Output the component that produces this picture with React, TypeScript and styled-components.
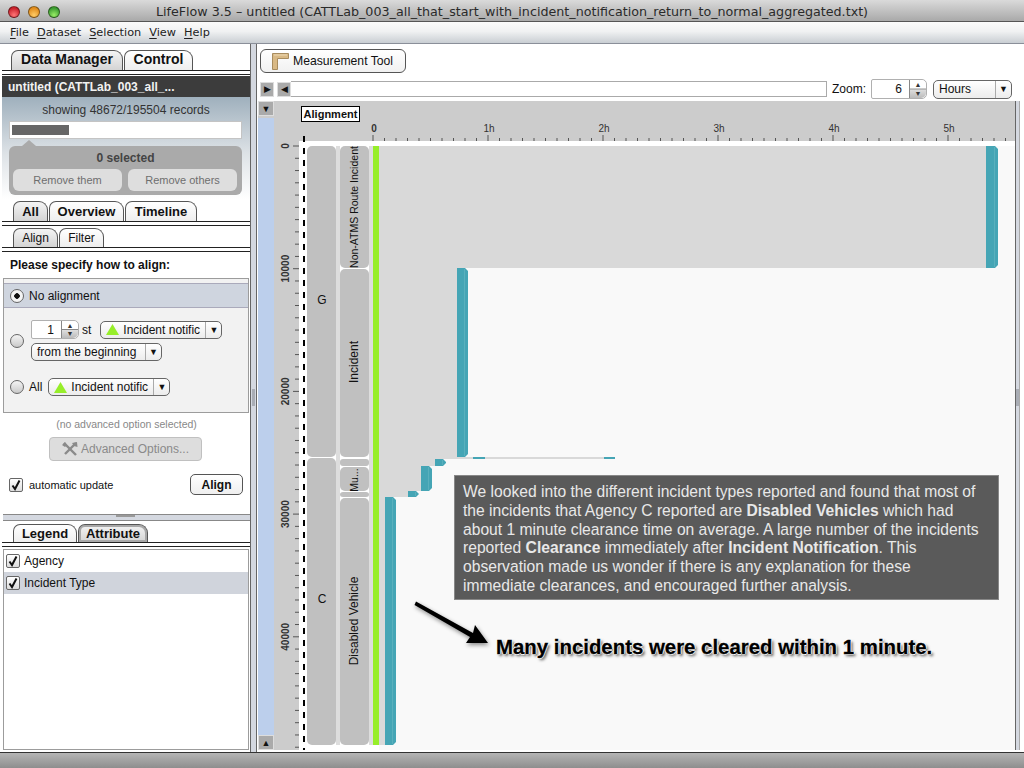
import styled, { createGlobalStyle } from "styled-components";
import { Fragment } from "react";

const Global = createGlobalStyle`
  * { box-sizing: border-box; }
  html, body { margin: 0; padding: 0; overflow: hidden; background: #fff; }
  body { font-family: "Liberation Sans", Arial, sans-serif; color: #111; }
`;

const Window = styled.div`
  width: 1024px;
  height: 768px;
  display: flex;
  flex-direction: column;
  overflow: hidden;
`;

const TitleBar = styled.div`
  height: 22px;
  flex: none;
  position: relative;
  display: flex;
  align-items: center;
  justify-content: center;
  padding-top: 2px;
  background: linear-gradient(#dadada, #a9a9a9);
  border-bottom: 1px solid #555;
  font-family: "DejaVu Sans", sans-serif;
  font-size: 12.7px;
  color: #2a2a2a;
`;

const Lights = styled.div`
  position: absolute;
  left: 8px;
  top: 6px;
  display: flex;
  gap: 8px;
`;

const Light = styled.span<{ $c: string; $d: string }>`
  width: 12px;
  height: 12px;
  border-radius: 50%;
  border: 1px solid rgba(0, 0, 0, 0.45);
  background: radial-gradient(circle at 50% 80%, ${(p) => p.$c}, ${(p) => p.$d} 75%);
`;

const MenuBar = styled.div`
  height: 22px;
  flex: none;
  display: flex;
  align-items: center;
  gap: 8px;
  padding: 0 0 1px 10px;
  background: linear-gradient(#fbfbfb, #f0f1f2 45%, #c9ced3);
  border-bottom: 1px solid #8a8f99;
  font-family: "DejaVu Sans", sans-serif;
  font-size: 11.3px;
  color: #222;
  u { text-underline-offset: 2px; }
`;

const Body = styled.div`
  flex: 1;
  display: flex;
  min-height: 0;
`;

const LeftPanel = styled.div`
  width: 250px;
  flex: none;
  display: flex;
  flex-direction: column;
  padding-left: 1px;
`;

const VSplit = styled.div`
  width: 7px;
  flex: none;
  position: relative;
  background: #d4d8e0;
  border-left: 1px solid #666;
  border-right: 1px solid #666;
  &::after {
    content: "";
    position: absolute;
    left: 1px;
    top: 345px;
    width: 3px;
    height: 17px;
    background: #a9adb5;
  }
`;

const TabStrip = styled.div<{ $top: number; $h: number; $pad?: number }>`
  height: ${(p) => p.$h}px;
  margin-top: ${(p) => p.$top}px;
  padding-left: ${(p) => p.$pad ?? 12}px;
  flex: none;
  display: flex;
  align-items: flex-end;
`;

const Tab = styled.div<{ $w: number; $sel?: boolean; $bold?: boolean; $inset?: boolean; $size?: number; $lift?: number }>`
  width: ${(p) => p.$w}px;
  height: 100%;
  margin-right: 1px;
  padding-bottom: ${(p) => p.$lift ?? 0}px;
  display: flex;
  align-items: center;
  justify-content: center;
  border: 1px solid #555;
  border-bottom: none;
  border-radius: 7px 9px 0 0;
  font-size: ${(p) => p.$size ?? 13}px;
  font-weight: ${(p) => (p.$bold ? 700 : 400)};
  color: #111;
  background: ${(p) => (p.$sel ? "linear-gradient(#f4f4f4, #d4d4d4)" : "linear-gradient(#ffffff, #eeeeee)")};
  box-shadow: ${(p) => (p.$inset ? "inset 0 0 0 2px #a8a8a8" : "none")};
`;

const TabRule = styled.div<{ $mb?: number }>`
  height: 5px;
  flex: none;
  margin-bottom: ${(p) => p.$mb ?? 0}px;
  border-top: 1px solid #222;
  border-bottom: 1px solid #222;
  margin-left: 1px;
`;

const DatasetHeader = styled.div`
  height: 21px;
  margin: 1px 0 0 1px;
  flex: none;
  display: flex;
  align-items: center;
  padding-left: 6px;
  background: #3c3c3c;
  color: #f2f2f2;
  font-size: 12px;
  font-weight: 700;
`;

const DatasetBody = styled.div`
  height: 102px;
  flex: none;
  margin-left: 1px;
  padding: 6px 7px 0 7px;
  background: linear-gradient(#9fb0bd, #dde2e6 55%, #ffffff 100%);
  display: flex;
  flex-direction: column;
`;

const RecordsLabel = styled.div`
  text-align: center;
  font-size: 12px;
  line-height: 14px;
  color: #333;
  margin-bottom: 4px;
`;

const RecordsBar = styled.div`
  height: 18px;
  flex: none;
  margin-right: 1px;
  padding: 3px 2px;
  background: #fff;
  border: 1px solid #c4c4c4;
`;

const RecordsFill = styled.div`
  height: 100%;
  background: #666;
`;

const Selected = styled.div`
  position: relative;
  margin-top: 7px;
  height: 49px;
  margin-right: 1px;
  padding: 5px 4px 0;
  border-radius: 6px;
  background: #aaaaaa;
  &::before {
    content: "";
    position: absolute;
    left: 13px;
    top: -6px;
    border-left: 7px solid transparent;
    border-right: 7px solid transparent;
    border-bottom: 6px solid #aaaaaa;
  }
`;

const SelectedCount = styled.div`
  text-align: center;
  font-size: 12px;
  line-height: 14px;
  font-weight: 700;
  color: #444;
  margin-bottom: 4px;
`;

const SelectedActions = styled.div`
  display: grid;
  grid-template-columns: 109px 109px;
  gap: 6px;
`;

const GhostButton = styled.div`
  height: 22px;
  display: flex;
  align-items: center;
  justify-content: center;
  border-radius: 6px;
  background: #dedede;
  color: #6e6e6e;
  font-size: 11px;
`;

const Heading = styled.div`
  height: 26px;
  flex: none;
  padding: 6px 0 0 9px;
  font-size: 12px;
  font-weight: 700;
  color: #111;
`;

const AlignBox = styled.div`
  height: 135px;
  flex: none;
  margin: 0 1px 0 2px;
  padding-top: 4px;
  background: #f2f2f2;
  border: 1px solid #9c9c9c;
`;

const AlignRow = styled.div<{ $sel?: boolean; $h: number }>`
  height: ${(p) => p.$h}px;
  display: flex;
  align-items: center;
  gap: 5px;
  padding-left: 6px;
  font-size: 12px;
  background: ${(p) => (p.$sel ? "#cfd5df" : "transparent")};
  border-top: ${(p) => (p.$sel ? "1px solid #aab" : "none")};
  border-bottom: ${(p) => (p.$sel ? "1px solid #aab" : "none")};
`;

const Radio = styled.span<{ $on?: boolean }>`
  width: 14px;
  height: 14px;
  flex: none;
  border-radius: 50%;
  border: 1px solid #666;
  background: ${(p) =>
    p.$on
      ? "radial-gradient(circle, #111 0, #111 2.5px, #f4f4f4 3px)"
      : "linear-gradient(#f4f4f4, #c9c9c9)"};
`;

const AlignStack = styled.div`
  display: flex;
  flex-direction: column;
  gap: 4px;
  margin-left: 2px;
`;

const AlignLine = styled.div`
  display: flex;
  align-items: center;
  gap: 3px;
`;

const Spinner = styled.div<{ $w: number; $h: number; $ml?: number }>`
  width: ${(p) => p.$w}px;
  height: ${(p) => p.$h}px;
  margin-left: ${(p) => p.$ml ?? 0}px;
  flex: none;
  display: flex;
  background: #fff;
  border: 1px solid #b0b0b0;
  border-radius: 2px 5px 5px 2px;
  font-size: 12px;
`;

const SpinnerValue = styled.div`
  flex: 1;
  display: flex;
  align-items: center;
  justify-content: flex-end;
  padding-right: 7px;
`;

const SpinnerArrows = styled.div`
  width: 17px;
  display: flex;
  flex-direction: column;
  border-left: 1px solid #888;
  font-size: 7px;
  line-height: 1;
  color: #333;
  background: linear-gradient(#fff 45%, #888 50%, #ddd 55%, #bbb);
  border-radius: 0 5px 5px 0;
  span { flex: 1; display: flex; align-items: center; justify-content: center; }
`;

const Select = styled.div<{ $w: number; $h?: number; $ml?: number }>`
  width: ${(p) => p.$w}px;
  height: ${(p) => p.$h ?? 18}px;
  flex: none;
  margin-left: ${(p) => p.$ml ?? 0}px;
  display: flex;
  align-items: center;
  background: linear-gradient(#ffffff, #ececec);
  border: 1px solid #666;
  border-radius: 5px;
  font-size: 12px;
  overflow: hidden;
`;

const SelectText = styled.div`
  flex: 1;
  min-width: 0;
  padding-left: 5px;
  display: flex;
  align-items: center;
  gap: 4px;
  white-space: nowrap;
  overflow: hidden;
`;

const SelectCaret = styled.div`
  width: 16px;
  height: 100%;
  flex: none;
  display: flex;
  align-items: center;
  justify-content: center;
  border-left: 1px solid #aaa;
  font-size: 9px;
  color: #111;
`;

const AdvancedNote = styled.div`
  text-align: center;
  font-size: 10.5px;
  color: #888;
  margin-top: 5px;
  height: 19px;
  flex: none;
  padding-left: 2px;
`;

const AdvancedButton = styled.div`
  width: 153px;
  height: 24px;
  flex: none;
  margin-left: 48px;
  display: flex;
  align-items: center;
  justify-content: center;
  gap: 3px;
  border: 1px solid #c0c0c0;
  border-radius: 4px;
  background: #dddddd;
  color: #8a8a8a;
  font-size: 12px;
`;

const UpdateRow = styled.div`
  height: 21px;
  flex: none;
  margin-top: 13px;
  padding: 0 7px 0 8px;
  display: flex;
  align-items: center;
  gap: 6px;
  font-size: 11px;
`;

const Check = styled.span`
  width: 14px;
  height: 14px;
  flex: none;
  display: flex;
  align-items: center;
  justify-content: center;
  border: 1px solid #666;
  border-radius: 2px;
  background: linear-gradient(#fff, #ddd);
`;

const PlainButton = styled.div`
  width: 53px;
  height: 21px;
  margin-left: auto;
  display: flex;
  align-items: center;
  justify-content: center;
  background: linear-gradient(#fff, #efefef);
  border: 1px solid #555;
  border-radius: 5px;
  font-size: 12px;
  font-weight: 700;
`;

const HSplit = styled.div`
  height: 7px;
  flex: none;
  margin: 19px 0 0 2px;
  position: relative;
  background: #d4d8e0;
  border-top: 1px solid #888;
  border-bottom: 1px solid #888;
  &::after {
    content: "";
    position: absolute;
    left: 113px;
    top: 0;
    width: 19px;
    height: 2px;
    background: #999;
  }
`;

const AttributeList = styled.div`
  flex: 1;
  margin: 2px 1px 2px 2px;
  background: #fff;
  border: 1px solid #9c9c9c;
`;

const AttributeRow = styled.div<{ $sel?: boolean }>`
  height: 22px;
  display: flex;
  align-items: center;
  gap: 4px;
  padding-left: 2px;
  font-size: 12px;
  background: ${(p) => (p.$sel ? "#d0d4dc" : "#fff")};
`;

const RightPanel = styled.div`
  flex: 1;
  min-width: 0;
  display: flex;
  flex-direction: column;
`;

const Toolbar = styled.div`
  height: 34px;
  flex: none;
  padding: 5px 0 0 3px;
`;

const ToolButton = styled.div`
  width: 146px;
  height: 24px;
  display: flex;
  align-items: center;
  gap: 4px;
  padding-left: 11px;
  background: linear-gradient(#fff, #f1f1f1);
  border: 1px solid #555;
  border-radius: 6px;
  font-size: 12.2px;
`;

const ScrollRow = styled.div`
  height: 23px;
  flex: none;
  display: flex;
  align-items: center;
  padding: 0 12px 1px 3px;
  font-size: 12px;
`;

const ArrowButton = styled.div`
  width: 14px;
  height: 15px;
  flex: none;
  display: flex;
  align-items: center;
  justify-content: center;
  margin-right: 3px;
  background: #aaa;
  border: 1px solid #ddd;
  font-size: 9px;
  color: #111;
`;

const ScrollTrack = styled.div`
  flex: 1;
  height: 16px;
  margin: 0 5px 0 -3px;
  background: #fff;
  border-top: 1px solid #aaa;
  border-bottom: 1px solid #aaa;
  border-right: 1px solid #aaa;
`;

const ChartRow = styled.div`
  flex: 1;
  min-height: 0;
  display: flex;
  margin-left: 1px;
  padding-bottom: 2px;
`;

const BlueTrack = styled.div`
  width: 16px;
  flex: none;
  display: flex;
  flex-direction: column;
  justify-content: space-between;
  background: linear-gradient(#cccccc 17px, #bccfec 17px);
`;

const TrackButton = styled.div`
  height: 15px;
  display: flex;
  align-items: center;
  justify-content: center;
  background: #aaa;
  border: 1px solid #ddd;
  font-size: 9px;
  color: #111;
`;

const Plot = styled.div`
  position: relative;
  width: 741px;
  height: 649px;
  flex: none;
`;

const ChartSvg = styled.svg`
  display: block;
  text {
    font-family: "Liberation Sans", Arial, sans-serif;
  }
`;

const AlignmentTag = styled.div`
  position: absolute;
  left: 27px;
  top: 5px;
  width: 59px;
  height: 16px;
  display: flex;
  align-items: center;
  justify-content: center;
  background: #fff;
  border: 1px solid #000;
  font-size: 11px;
  font-weight: 700;
`;

const Note = styled.div`
  position: absolute;
  left: 180px;
  top: 374px;
  width: 545px;
  height: 125px;
  padding: 7px 0 0 8px;
  background: #5a5a5a;
  border: 1px solid #888;
  color: #e8e8e8;
  font-size: 15.65px;
  line-height: 18.8px;
  white-space: nowrap;
`;

const Callout = styled.div`
  position: absolute;
  left: 222px;
  top: 535px;
  font-size: 20.4px;
  font-weight: 700;
  color: #000;
  white-space: nowrap;
  -webkit-text-stroke: 0.3px #000;
  text-shadow: 1px 0 #fff, -1px 0 #fff, 0 1px #fff, 0 -1px #fff, 2px 2px 3px rgba(0, 0, 0, 0.7);
`;

const RightEdge = styled.div`
  width: 5px;
  flex: none;
  background: #d4d8e0;
  border-left: 1px solid #666;
  border-right: 1px solid #aaa;
  position: relative;
  &::after {
    content: "";
    position: absolute;
    left: 0;
    top: 288px;
    width: 3px;
    height: 17px;
    background: #a9adb5;
  }
`;

const StatusBar = styled.div`
  height: 16px;
  flex: none;
  background: linear-gradient(#b5b5b5, #8e8e8e);
  border-top: 1px solid #333;
`;

const CheckMark = () => (
  <svg width="12" height="12" viewBox="0 0 12 12">
    <path d="M2.5 6.5 L5 10 L9.5 1.5" fill="none" stroke="#111" strokeWidth="2" />
  </svg>
);

const GreenTri = () => (
  <svg width="13" height="11" viewBox="0 0 13 11">
    <polygon points="6.5,0 13,11 0,11" fill="#97ee2a" />
  </svg>
);

const AngleIcon = () => (
  <svg width="17" height="17" viewBox="0 0 17 17">
    <path d="M0.5 0.5 H16.5 V5.5 H5.5 V16.5 H0.5 Z" fill="#d9b985" stroke="#a88c5e" />
    <path d="M2 2 H15" stroke="#ecd9b4" />
  </svg>
);

const ToolsIcon = () => (
  <svg width="16" height="14" viewBox="0 0 16 14">
    <path d="M2 1 L14 13" stroke="#8a8a8a" strokeWidth="2.4" />
    <path d="M14 1 L3 12" stroke="#8a8a8a" strokeWidth="2.4" />
    <path d="M10 1 L15 0 L15.5 5 L12 4 Z M0 3 L3 0 L5 3 L3 5 Z" fill="#8a8a8a" />
  </svg>
);

// all chart coordinates are page coordinates, the viewBox takes care of the offset
const hourTicks = Array.from({ length: 56 }, (_, i) => 373 + i * 11.5);
const recordTicks = Array.from({ length: 50 }, (_, i) => 146 + i * 12.27);

const HOURS = [
  { t: "0", x: 374, bold: true },
  { t: "1h", x: 489 },
  { t: "2h", x: 604 },
  { t: "3h", x: 719 },
  { t: "4h", x: 834 },
  { t: "5h", x: 949 },
];

const BARS = [
  { y: 146, h: 122, end: 986, cap: 12 },
  { y: 268, h: 189, end: 457, cap: 11 },
  { y: 459, h: 7, end: 435, cap: 11 },
  { y: 466, h: 25, end: 421, cap: 11 },
  { y: 491, h: 6, end: 408, cap: 11 },
  { y: 497, h: 248, end: 385, cap: 11 },
];

const Cell = ({ x, y, h }: { x: number; y: number; h: number }) => (
  <rect x={x} y={y} width={29} height={h} rx={h < 10 ? 3 : 5} fill="#c0c0c0" />
);

const Chart = () => (
  <ChartSvg width="741" height="649" viewBox="274 101 741 649">
    <rect x="274" y="101" width="741" height="649" fill="#cccccc" />
    <rect x="299" y="141" width="716" height="609" fill="#f9f9f9" />
    <rect x="299" y="141" width="716" height="5" fill="#ffffff" />
    <rect x="299" y="146" width="80" height="604" fill="#ffffff" />
    <rect x="336" y="146" width="4" height="599" fill="#dddddd" />
    <rect x="369" y="146" width="4" height="599" fill="#dddddd" />

    {hourTicks.map((x, i) => (
      <line key={i} x1={x} x2={x} y1={i % 10 === 0 ? 135 : 138} y2="141" stroke="#555" />
    ))}
    {HOURS.map((h) => (
      <text key={h.t} x={h.x} y="132" textAnchor="middle" fontSize="10" fontWeight={h.bold ? 700 : 400} fill="#333">
        {h.t}
      </text>
    ))}
    {recordTicks.map((y, i) => (
      <line key={i} x1={i % 10 === 0 ? 293 : 295} x2="299" y1={y} y2={y} stroke="#555" />
    ))}
    {[0, 10000, 20000, 30000, 40000].map((v, i) => (
      <text key={v} transform={`translate(289 ${146 + i * 122.7}) rotate(-90)`} textAnchor="middle" fontSize="10" fontWeight={700} fill="#333">
        {v}
      </text>
    ))}

    <Cell x={307} y={146} h={311} />
    <Cell x={307} y={458} h={287} />
    <Cell x={340} y={146} h={122} />
    <Cell x={340} y={269} h={188} />
    <Cell x={340} y={459} h={7} />
    <Cell x={340} y={467} h={24} />
    <Cell x={340} y={492} h={5} />
    <Cell x={340} y={498} h={247} />

    <text x="322" y="304" textAnchor="middle" fontSize="12" fill="#111">G</text>
    <text x="322" y="603" textAnchor="middle" fontSize="12" fill="#111">C</text>
    <text transform="translate(358 207) rotate(-90)" textAnchor="middle" fontSize="10.5" fill="#111">Non-ATMS Route Incident</text>
    <text transform="translate(358 362) rotate(-90)" textAnchor="middle" fontSize="12" fill="#111">Incident</text>
    <text transform="translate(358 480) rotate(-90)" textAnchor="middle" fontSize="10.5" fill="#111">Mu...</text>
    <text transform="translate(358 621) rotate(-90)" textAnchor="middle" fontSize="12" fill="#111">Disabled Vehicle</text>

    <rect x="379" y="457" width="228" height="2" fill="#d9d9d9" />
    <rect x="473" y="457" width="12" height="2" fill="#45a5b5" />
    <rect x="604" y="457" width="11" height="2" fill="#45a5b5" />
    {BARS.map((b) => (
      <Fragment key={b.y}>
        <rect x="379" y={b.y} width={b.end - 379} height={b.h} fill="#d9d9d9" />
        <polygon
          points={`${b.end},${b.y} ${b.end + b.cap - 3},${b.y} ${b.end + b.cap},${b.y + 3} ${b.end + b.cap},${b.y + b.h - 3} ${b.end + b.cap - 3},${b.y + b.h} ${b.end},${b.y + b.h}`}
          fill="#45a5b5"
        />
        <rect x={b.end + b.cap - 4} y={b.y + 1} width="1" height={Math.max(b.h - 2, 1)} fill="#5ab0bd" />
      </Fragment>
    ))}
    <rect x="373" y="146" width="6" height="599" fill="#97ee2a" />

    <line x1="304" x2="304" y1="136" y2="750" stroke="#000" strokeWidth="2" strokeDasharray="6 6" />

    <polygon
      points="414.5,605 416,601.5 473,633 475,625 488,643 466,643 470,637"
      fill="#000"
      style={{ filter: "drop-shadow(1px 2px 2px rgba(0,0,0,0.45))" }}
    />
  </ChartSvg>
);

export default function App() {
  return (
    <Window>
      <Global />
      <TitleBar>
        <Lights>
          <Light $c="#f77" $d="#c8202a" />
          <Light $c="#fc6" $d="#e08a1a" />
          <Light $c="#9e6" $d="#3a9a30" />
        </Lights>
        LifeFlow 3.5 – untitled (CATTLab_003_all_that_start_with_incident_notification_return_to_normal_aggregated.txt)
      </TitleBar>
      <MenuBar>
        <span><u>F</u>ile</span>
        <span><u>D</u>ataset</span>
        <span><u>S</u>election</span>
        <span><u>V</u>iew</span>
        <span><u>H</u>elp</span>
      </MenuBar>
      <Body>
        <LeftPanel>
          <TabStrip $top={6} $h={20} $pad={10}>
            <Tab $w={112} $sel $bold $size={14} $lift={3}>Data Manager</Tab>
            <Tab $w={69} $bold $size={14} $lift={3}>Control</Tab>
          </TabStrip>
          <TabRule />
          <DatasetHeader>untitled (CATTLab_003_all_...</DatasetHeader>
          <DatasetBody>
            <RecordsLabel>showing 48672/195504 records</RecordsLabel>
            <RecordsBar>
              <RecordsFill style={{ width: `${(48672 / 195504) * 100}%` }} />
            </RecordsBar>
            <Selected>
              <SelectedCount>0 selected</SelectedCount>
              <SelectedActions>
                <GhostButton>Remove them</GhostButton>
                <GhostButton>Remove others</GhostButton>
              </SelectedActions>
            </Selected>
          </DatasetBody>
          <TabStrip $top={2} $h={20}>
            <Tab $w={35} $sel $bold>All</Tab>
            <Tab $w={75} $bold>Overview</Tab>
            <Tab $w={72} $bold>Timeline</Tab>
          </TabStrip>
          <TabRule $mb={2} />
          <TabStrip $top={0} $h={19}>
            <Tab $w={45} $sel $size={12}>Align</Tab>
            <Tab $w={45} $size={12}>Filter</Tab>
          </TabStrip>
          <TabRule />
          <Heading>Please specify how to align:</Heading>
          <AlignBox>
            <AlignRow $sel $h={25}>
              <Radio $on />
              No alignment
            </AlignRow>
            <AlignRow $h={65}>
              <Radio />
              <AlignStack>
                <AlignLine>
                  <Spinner $w={48} $h={19}>
                    <SpinnerValue>1</SpinnerValue>
                    <SpinnerArrows><span>▲</span><span>▼</span></SpinnerArrows>
                  </Spinner>
                  st
                  <Select $w={122} $ml={6}>
                    <SelectText><GreenTri />Incident notific</SelectText>
                    <SelectCaret>▼</SelectCaret>
                  </Select>
                </AlignLine>
                <Select $w={131}>
                  <SelectText>from the beginning</SelectText>
                  <SelectCaret>▼</SelectCaret>
                </Select>
              </AlignStack>
            </AlignRow>
            <AlignRow $h={28}>
              <Radio />
              All
              <Select $w={122} $ml={1}>
                <SelectText><GreenTri />Incident notific</SelectText>
                <SelectCaret>▼</SelectCaret>
              </Select>
            </AlignRow>
          </AlignBox>
          <AdvancedNote>(no advanced option selected)</AdvancedNote>
          <AdvancedButton><ToolsIcon />Advanced Options...</AdvancedButton>
          <UpdateRow>
            <Check><CheckMark /></Check>
            automatic update
            <PlainButton>Align</PlainButton>
          </UpdateRow>
          <HSplit />
          <TabStrip $top={3} $h={18}>
            <Tab $w={64} $bold>Legend</Tab>
            <Tab $w={70} $sel $bold $inset>Attribute</Tab>
          </TabStrip>
          <TabRule />
          <AttributeList>
            <AttributeRow><Check><CheckMark /></Check>Agency</AttributeRow>
            <AttributeRow $sel><Check><CheckMark /></Check>Incident Type</AttributeRow>
          </AttributeList>
        </LeftPanel>
        <VSplit />
        <RightPanel>
          <Toolbar>
            <ToolButton><AngleIcon />Measurement Tool</ToolButton>
          </Toolbar>
          <ScrollRow>
            <ArrowButton>▶</ArrowButton>
            <ArrowButton>◀</ArrowButton>
            <ScrollTrack />
            Zoom:
            <Spinner $w={56} $h={20} $ml={5}>
              <SpinnerValue>6</SpinnerValue>
              <SpinnerArrows><span>▲</span><span>▼</span></SpinnerArrows>
            </Spinner>
            <Select $w={79} $h={19} $ml={6}>
              <SelectText>Hours</SelectText>
              <SelectCaret>▼</SelectCaret>
            </Select>
          </ScrollRow>
          <ChartRow>
            <BlueTrack>
              <TrackButton>▼</TrackButton>
              <TrackButton>▲</TrackButton>
            </BlueTrack>
            <Plot>
              <Chart />
              <AlignmentTag>Alignment</AlignmentTag>
              <Note>
                We looked into the different incident types reported and found that most of<br />
                the incidents that Agency C reported are <b>Disabled Vehicles</b> which had<br />
                about 1 minute clearance time on average. A large number of the incidents<br />
                reported <b>Clearance</b> immediately after <b>Incident Notification</b>. This<br />
                observation made us wonder if there is any explanation for these<br />
                immediate clearances, and encouraged further analysis.
              </Note>
              <Callout>Many incidents were cleared within 1 minute.</Callout>
            </Plot>
            <RightEdge />
          </ChartRow>
        </RightPanel>
      </Body>
      <StatusBar />
    </Window>
  );
}
